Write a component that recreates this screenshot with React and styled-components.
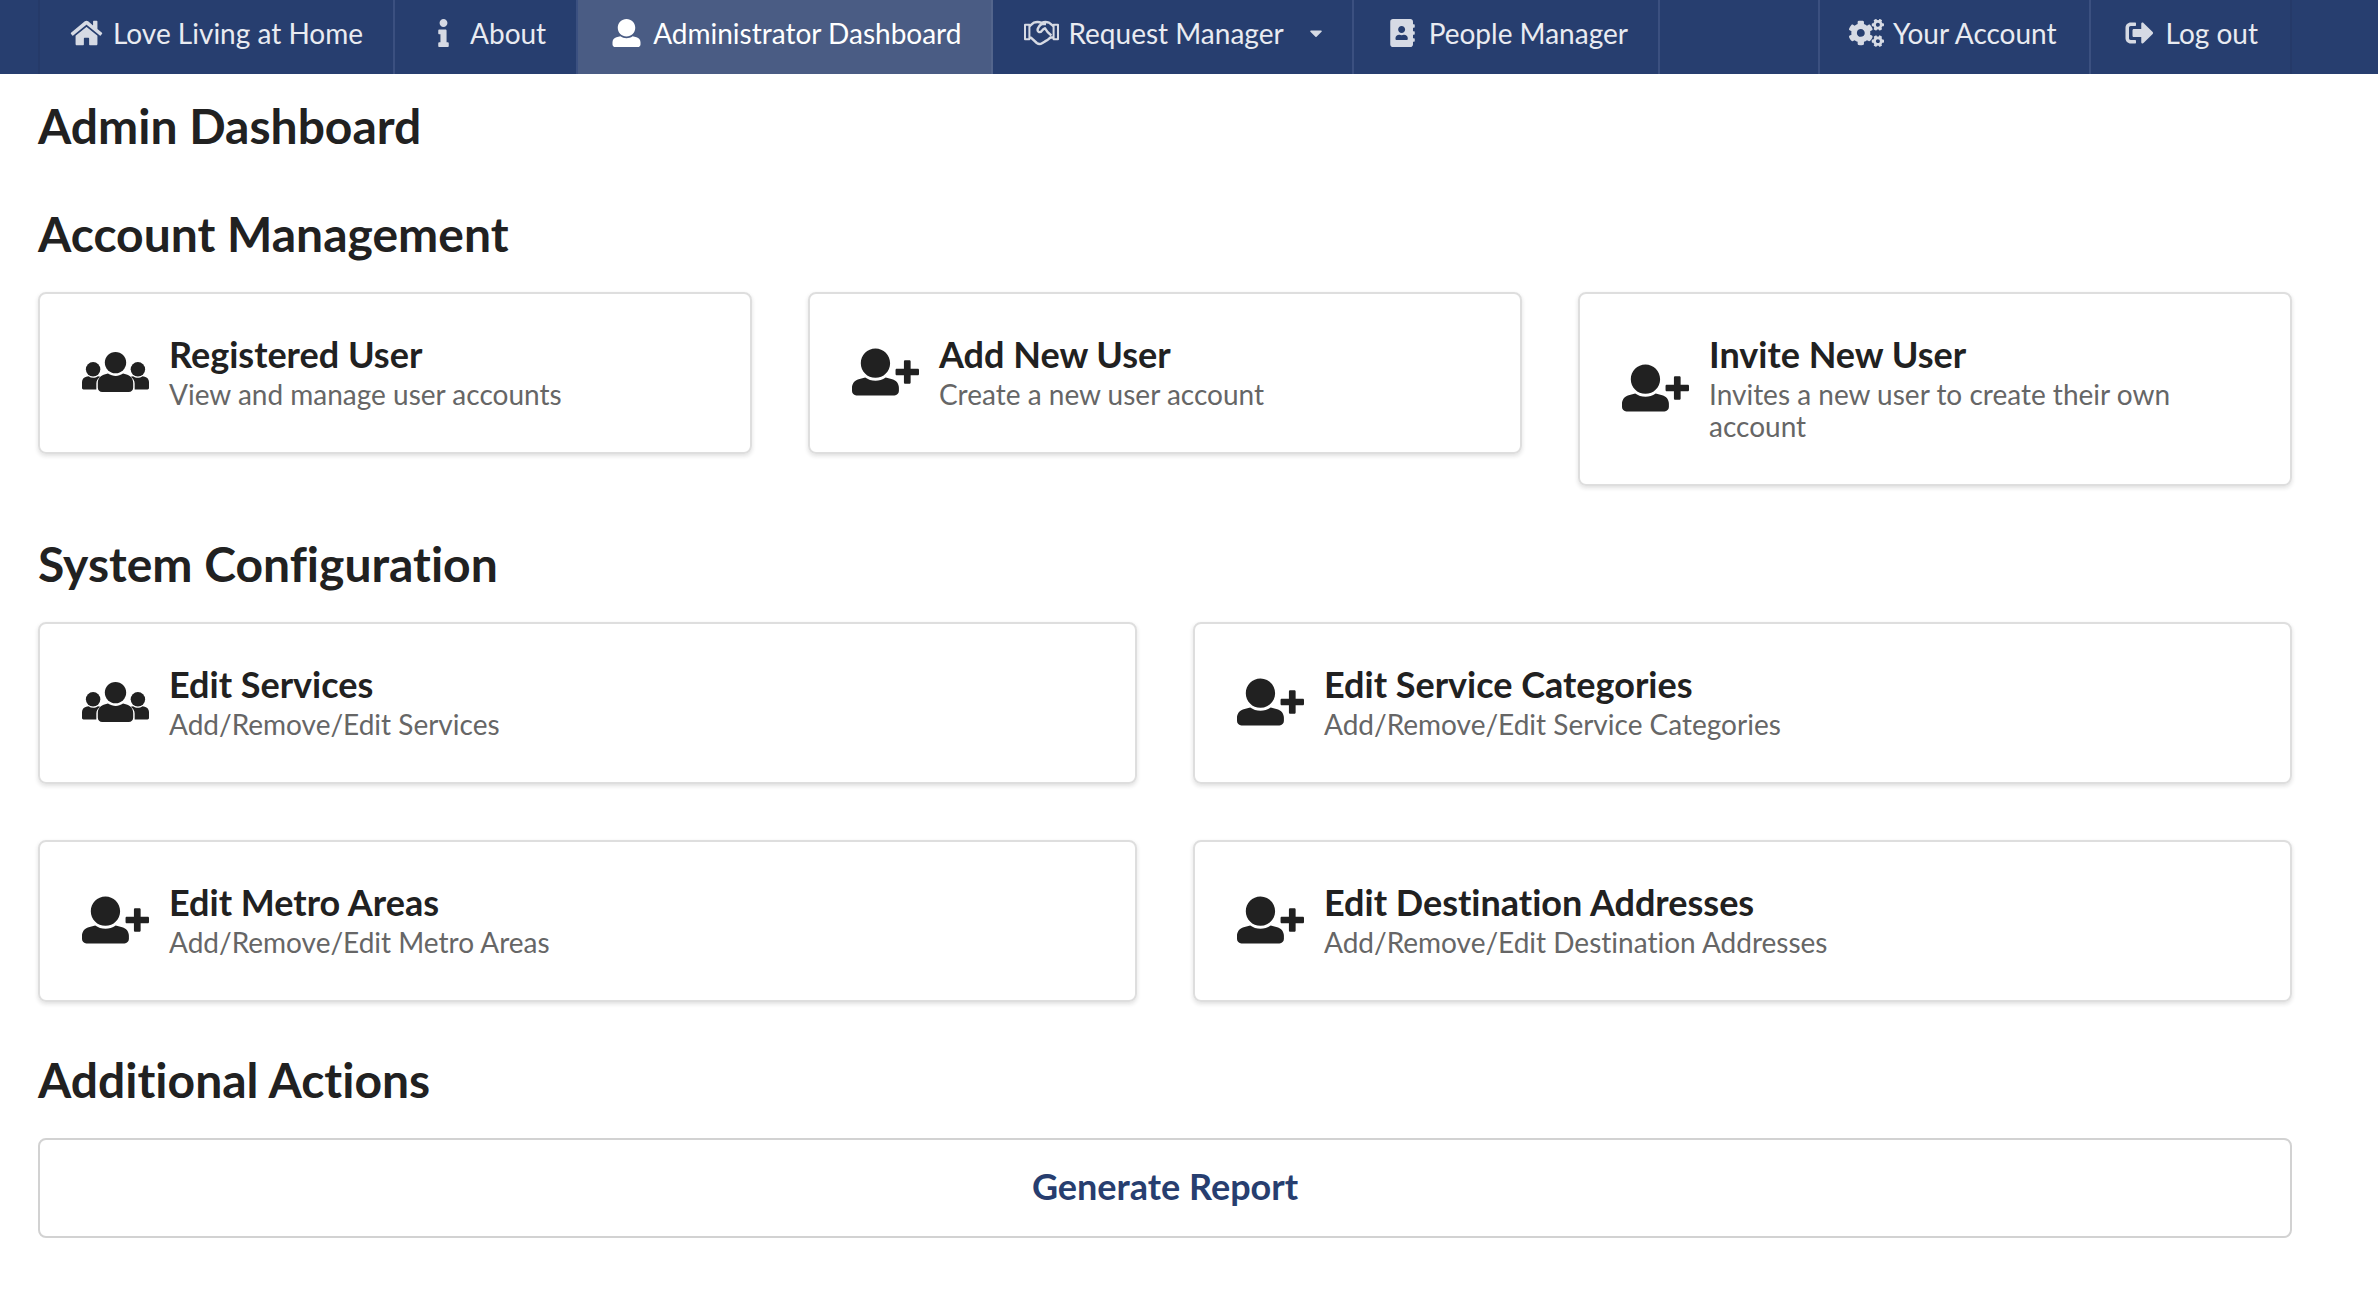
import React from "react";
import styled, { createGlobalStyle } from "styled-components";
import {
  FaAddressBook,
  FaCaretDown,
  FaCogs,
  FaInfo,
  FaSignOutAlt,
} from "react-icons/fa";

const HomeIcon = () => (
  <svg viewBox="0 0 576 512" fill="currentColor" aria-hidden="true">
    <path d="M488 312.7V456c0 13.3-10.7 24-24 24H348c-6.6 0-12-5.4-12-12V356c0-6.6-5.4-12-12-12h-72c-6.6 0-12 5.4-12 12v112c0 6.6-5.4 12-12 12H112c-13.3 0-24-10.7-24-24V312.7c0-3.6 1.6-7 4.4-9.3l188-154.8c4.4-3.6 10.8-3.6 15.3 0l188 154.8c2.7 2.3 4.3 5.7 4.3 9.3zm83.6-60.9L488 182.9V44.4c0-6.6-5.4-12-12-12h-56c-6.6 0-12 5.4-12 12V117l-89.5-73.7c-17.7-14.6-43.3-14.6-61 0L4.4 251.8c-5.1 4.2-5.8 11.8-1.6 16.9l25.5 31c4.2 5.1 11.8 5.8 16.9 1.6l235.2-193.7c4.4-3.6 10.8-3.6 15.3 0l235.2 193.7c5.1 4.2 12.7 3.5 16.9-1.6l25.5-31c4.2-5.2 3.4-12.7-1.7-16.9z" />
  </svg>
);

const UserIcon = () => (
  <svg viewBox="0 0 512 512" fill="currentColor" aria-hidden="true">
    <path d="M256 0c88.366 0 160 71.634 160 160s-71.634 160-160 160S96 248.366 96 160 167.634 0 256 0zm183.283 333.821l-71.313-17.828c-74.923 53.89-165.738 41.864-223.94 0l-71.313 17.828C29.981 344.505 0 382.903 0 426.955V464c0 26.51 21.49 48 48 48h416c26.51 0 48-21.49 48-48v-37.045c0-44.052-29.981-82.45-72.717-93.134z" />
  </svg>
);

const HandshakeIcon = () => (
  <svg
    viewBox="0 0 35 28"
    fill="none"
    stroke="currentColor"
    strokeWidth="2.4"
    strokeLinejoin="round"
    aria-hidden="true"
  >
    <path d="M1 5.7h4.4v14.6H1zM29.6 5.7H34v14.6h-4.4z" strokeWidth="2" />
    <path d="M5.4 7.2 9.8 3.6C13 2.6 15.6 3 17.5 3.8c2-.8 4.600-1.200 7.500-.2l4.600 3.600" />
    <path d="M5.400 18.800h1.800l5.600 5.200c1.700 1.300 3.500 1.400 5.200.3l3-1.900 2.900-1.700 2.600-2.200h3.100" />
    <path d="M22 5h-3.600c-1.500 0-2.700 1.500-3.800 3.200-1.500 2.200-1.300 3.900-.1 4.600 1.600.9 3-.2 4.200-2l2.300-1.600c1.800 3.500 3.900 5.500 6.400 7.300" />
  </svg>
);

const UsersIcon = () => (
  <svg viewBox="0 0 640 512" fill="currentColor" aria-hidden="true">
    <circle cx="320" cy="166" r="102" />
    <circle cx="106" cy="230" r="69" />
    <circle cx="534" cy="230" r="69" />
    <path d="M426 280l-34-9c-48 34-98 28-144 0l-34 9c-37 10-63 42-63 80v46c0 23 19 42 42 42h254c23 0 42-19 42-42v-46c0-38-26-70-63-80z" />
    <path d="M0 352c0-26 17-46 40-51l22-5c30 20 62 19 90 0l22 5c-24 16-37 39-37 66v55H14c-8 0-14-6-14-14zM640 352c0-26-17-46-40-51l-22-5c-30 20-62 19-90 0l-22 5c24 16 37 39 37 66v55h123c8 0 14-6 14-14z" />
  </svg>
);

const UserPlusIcon = () => (
  <svg viewBox="0 0 640 512" fill="currentColor" aria-hidden="true">
    <path d="M224 32c77.300 0 140 62.700 140 140s-62.700 140-140 140S84 249.300 84 172 146.700 32 224 32zm160.400 292.100L322 308.500c-65.600 47.200-145 36.600-196 0l-62.400 15.600C26.200 333.500 0 367.100 0 405.600V438c0 23.200 18.800 42 42 42h364c23.200 0 42-18.800 42-42v-32.400c0-38.500-26.200-72.100-63.600-81.500z" />
    <path d="M628 224h-68v-68c0-6.600-5.400-12-12-12h-40c-6.600 0-12 5.400-12 12v68h-68c-6.600 0-12 5.400-12 12v40c0 6.600 5.400 12 12 12h68v68c0 6.600 5.400 12 12 12h40c6.600 0 12-5.400 12-12v-68h68c6.600 0 12-5.400 12-12v-40c0-6.600-5.400-12-12-12z" />
  </svg>
);

const mainLinks = [
  { label: "Love Living at Home", icon: HomeIcon },
  { label: "About", icon: FaInfo },
  { label: "Administrator Dashboard", icon: UserIcon, active: true },
  { label: "Request Manager", icon: HandshakeIcon, dropdown: true },
  { label: "People Manager", icon: FaAddressBook },
];

const userLinks = [
  { label: "Your Account", icon: FaCogs },
  { label: "Log out", icon: FaSignOutAlt },
];

const accountCards = [
  {
    title: "Registered User",
    text: "View and manage user accounts",
    icon: UsersIcon,
  },
  {
    title: "Add New User",
    text: "Create a new user account",
    icon: UserPlusIcon,
  },
  {
    title: "Invite New User",
    text: "Invites a new user to create their own account",
    icon: UserPlusIcon,
  },
];

const systemCards = [
  {
    title: "Edit Services",
    text: "Add/Remove/Edit Services",
    icon: UsersIcon,
  },
  {
    title: "Edit Service Categories",
    text: "Add/Remove/Edit Service Categories",
    icon: UserPlusIcon,
  },
  {
    title: "Edit Metro Areas",
    text: "Add/Remove/Edit Metro Areas",
    icon: UserPlusIcon,
  },
  {
    title: "Edit Destination Addresses",
    text: "Add/Remove/Edit Destination Addresses",
    icon: UserPlusIcon,
  },
];

function NavItem({ item }) {
  const Icon = item.icon;

  return (
    <NavLink
      href="#"
      $active={item.active}
      aria-current={item.active ? "page" : undefined}
    >
      <NavIcon>
        <Icon />
      </NavIcon>
      {item.label}
      {item.dropdown && (
        <Caret>
          <FaCaretDown />
        </Caret>
      )}
    </NavLink>
  );
}

function CardList({ cards, columns }) {
  return (
    <Grid $columns={columns}>
      {cards.map(({ title, text, icon: Icon }) => (
        <Card href="#" key={title}>
          <CardIcon>
            <Icon />
          </CardIcon>
          <CardBody>
            <CardTitle>{title}</CardTitle>
            <CardText>{text}</CardText>
          </CardBody>
        </Card>
      ))}
    </Grid>
  );
}

function App() {
  return (
    <>
      <GlobalStyle />
      <Nav>
        <Menu>
          {mainLinks.map((item) => (
            <NavItem item={item} key={item.label} />
          ))}
        </Menu>
        <RightMenu>
          {userLinks.map((item) => (
            <NavItem item={item} key={item.label} />
          ))}
        </RightMenu>
      </Nav>
      <Main>
        <Title>Admin Dashboard</Title>
        <Section>
          <Heading>Account Management</Heading>
          <CardList cards={accountCards} columns={3} />
        </Section>
        <Section>
          <Heading>System Configuration</Heading>
          <CardList cards={systemCards} columns={2} />
        </Section>
        <Section>
          <Heading>Additional Actions</Heading>
          <ReportButton type="button">Generate Report</ReportButton>
        </Section>
      </Main>
    </>
  );
}

export default App;

const GlobalStyle = createGlobalStyle`
  * {
    box-sizing: border-box;
  }

  body {
    margin: 0;
    background-color: #fff;
    color: #212121;
    font-family: Lato, "Liberation Sans", sans-serif;
    font-size: 28px;
    font-variant-ligatures: no-common-ligatures;
  }
`;

const Nav = styled.nav`
  display: flex;
  justify-content: space-between;
  padding: 0 86px 0 38px;
  background-color: #273e6f;
`;

const Menu = styled.div`
  display: flex;
  box-shadow: inset 2px 0 #253a69;
`;

const RightMenu = styled(Menu)`
  box-shadow: inset 2px 0 #3b5080;

  a {
    padding-right: 32px;
  }

  a:last-child {
    border-right-color: #253a69;
  }
`;

const NavLink = styled.a`
  display: flex;
  align-items: center;
  padding: 19px 30px 27px 32px;
  border-right: 2px solid ${({ $active }) => ($active ? "#53658c" : "#3b5080")};
  background-color: ${({ $active }) => ($active ? "#4a5c84" : "transparent")};
  color: ${({ $active }) => ($active ? "#fff" : "#e9ebf1")};
  line-height: 28px;
  text-decoration: none;
  white-space: nowrap;

  ${RightMenu} & {
    padding-right: 32px;
  }
`;

const NavIcon = styled.span`
  display: flex;
  justify-content: center;
  width: 33px;
  margin-right: 10px;
  opacity: 0.9;

  svg {
    flex: none;
    width: 35px;
    height: 28px;
  }

  a[aria-current] & {
    opacity: 1;
  }
`;

const Caret = styled.span`
  display: flex;
  margin: 0 -4px 0 22px;
  font-size: 20px;
  opacity: 0.9;
`;

const Main = styled.main`
  display: flex;
  flex-direction: column;
  gap: 48px;
  padding: 22px 86px 72px 38px;
`;

const Title = styled.h1`
  margin: 0;
  font-size: 48px;
  font-weight: 700;
  line-height: 60px;
`;

const Section = styled.section`
  display: flex;
  flex-direction: column;
  gap: 28px;
`;

const Heading = styled.h2`
  margin: 0;
  font-size: 48px;
  font-weight: 700;
  line-height: 60px;
`;

const Grid = styled.div`
  display: grid;
  grid-template-columns: repeat(${({ $columns }) => $columns}, minmax(0, 1fr));
  align-items: start;
  gap: 56px;
`;

const Card = styled.a`
  display: flex;
  align-items: center;
  gap: 20px;
  padding: 39px 42px 41px;
  border: 2px solid #dedede;
  border-radius: 8px;
  box-shadow: 0 2px 4px rgba(34, 36, 38, 0.14);
  color: inherit;
  text-decoration: none;

  &:hover {
    border-color: #c8c8c9;
  }
`;

const CardIcon = styled.span`
  display: flex;
  flex: none;

  svg {
    width: 67px;
    height: 54px;
  }
`;

const CardBody = styled.div`
  display: flex;
  flex-direction: column;
  gap: 2px;
  padding-bottom: 1px;
`;

const CardTitle = styled.h3`
  margin: 0;
  font-size: 36px;
  font-weight: 700;
  line-height: 43px;
`;

const CardText = styled.p`
  margin: 0;
  color: #666;
  line-height: 32px;
`;

const ReportButton = styled.button`
  padding: 25px 42px 28px;
  border: 2px solid #d2d2d2;
  border-radius: 8px;
  background-color: #fff;
  color: #273e6f;
  font-family: inherit;
  font-size: 36px;
  font-weight: 700;
  line-height: 43px;
  cursor: pointer;
`;
